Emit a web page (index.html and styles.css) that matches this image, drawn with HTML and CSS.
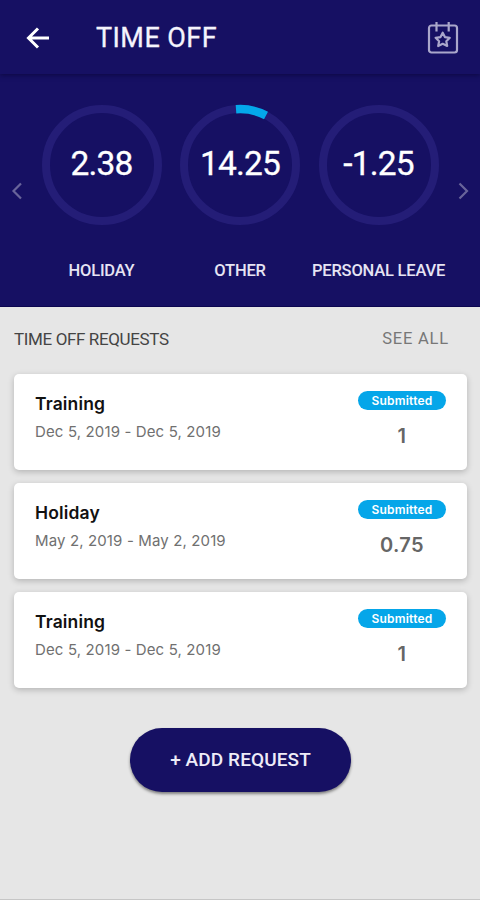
FILE: index.html
```html
<!DOCTYPE html>
<html lang="en">
<head>
<meta charset="utf-8">
<title>Time Off</title>
<link rel="stylesheet" href="styles.css">
</head>
<body>
<div class="app">
  <header class="bar">
    <svg class="back" width="24" height="24" viewBox="0 0 24 24"><path d="M23 12H2.5M12 2.5L2.5 12L12 21.5"/></svg>
    <h1 class="title">TIME OFF</h1>
    <svg class="calendar" width="32" height="34" viewBox="0 0 32 34"><rect x="2" y="4.5" width="28" height="27" rx="2.5"/><path d="M9.5 1v9.5M21.7 1v9.5"/><path d="M15.7 11.7l2.2 4.4 4.9.7-3.5 3.5.9 4.7-4.5-2.2-4.5 2.2.9-4.7-3.5-3.5 4.9-.7z"/></svg>
  </header>
  <section class="balances">
    <svg class="chevron" width="11" height="18" viewBox="0 0 11 18"><path d="M10 1.5L2.5 9L10 16.5"/></svg>
    <div class="gauges">
      <div class="gauge">
        <div class="ring"><svg width="122" height="122" viewBox="0 0 122 122"><circle class="track" cx="61" cy="61" r="56"/></svg><span class="value">2.38</span></div>
        <div class="label">HOLIDAY</div>
      </div>
      <div class="gauge">
        <div class="ring"><svg width="122" height="122" viewBox="0 0 122 122"><circle class="track" cx="61" cy="61" r="56"/><path class="progress" d="M57 5.2A56 56 0 0 1 87 11.4"/></svg><span class="value">14.25</span></div>
        <div class="label">OTHER</div>
      </div>
      <div class="gauge">
        <div class="ring"><svg width="122" height="122" viewBox="0 0 122 122"><circle class="track" cx="61" cy="61" r="56"/></svg><span class="value">-1.25</span></div>
        <div class="label">PERSONAL LEAVE</div>
      </div>
    </div>
    <svg class="chevron" width="11" height="18" viewBox="0 0 11 18"><path d="M1.5 1.5L9 9L1.5 16.5"/></svg>
  </section>
  <main class="content">
    <div class="heading"><h2>TIME OFF REQUESTS</h2><a class="all">SEE ALL</a></div>
    <div class="list">
      <article class="card">
        <div><h3>Training</h3><p>Dec 5, 2019 - Dec 5, 2019</p></div>
        <div class="status"><span class="badge">Submitted</span><strong>1</strong></div>
      </article>
      <article class="card">
        <div><h3>Holiday</h3><p>May 2, 2019 - May 2, 2019</p></div>
        <div class="status"><span class="badge">Submitted</span><strong>0.75</strong></div>
      </article>
      <article class="card">
        <div><h3>Training</h3><p>Dec 5, 2019 - Dec 5, 2019</p></div>
        <div class="status"><span class="badge">Submitted</span><strong>1</strong></div>
      </article>
    </div>
    <button class="add">+ ADD REQUEST</button>
  </main>
</div>
</body>
</html>
```
FILE: styles.css
```css
* { box-sizing: border-box; }
body, h1, h2, h3, p { margin: 0; }
body { background: #e6e6e6; font-family: Roboto, sans-serif; }
svg { display: block; fill: none; flex: none; }
.app { height: 900px; display: flex; flex-direction: column; border-bottom: 1px solid #c6c6c6; }
.bar { height: 74px; background: #161063; display: flex; align-items: center; padding: 2px 21px 0 26px; box-shadow: 0 1px 5px rgba(8, 4, 50, .7); z-index: 1; }
.back { stroke: #fff; stroke-width: 3; }
.title { margin-left: 46px; flex: 1; color: #f5f4fc; font-size: 27px; font-weight: 400; line-height: 32px; letter-spacing: .45px; -webkit-text-stroke: .3px #f5f4fc; }
.calendar { stroke: #aaa7cb; stroke-width: 2.2; stroke-linejoin: round; }
.balances { height: 233px; background: #161063; display: flex; align-items: flex-start; padding: 30px 11px 0; border-bottom: 1px solid #0c0650; }
.chevron { margin-top: 78px; stroke: #68649a; stroke-width: 2.2; }
.gauges { flex: 1; display: grid; grid-template-columns: repeat(3, 138.5px); justify-content: center; }
.gauge { display: flex; flex-direction: column; align-items: center; }
.ring { display: grid; place-items: center; }
.ring > * { grid-area: 1 / 1; }
.track { stroke: #241d77; stroke-width: 8; }
.progress { stroke: #04a8ea; stroke-width: 8.5; }
.value { padding-bottom: 2px; color: #fff; font-size: 33.5px; line-height: 40px; letter-spacing: -.8px; -webkit-text-stroke: .3px #fff; }
.label { margin-top: 35px; color: #e6e4f3; font-size: 16.5px; font-weight: 500; line-height: 20px; letter-spacing: -.2px; white-space: nowrap; }
.content { flex: 1; padding: 0 13px 0 14px; }
.heading { height: 67px; padding: 22px 18px 0 0; display: flex; justify-content: space-between; line-height: 20px; }
.heading h2 { font-size: 17px; font-weight: 400; letter-spacing: -.37px; color: #444; }
.all { color: #777; font-size: 16.5px; letter-spacing: .8px; }
.list { display: flex; flex-direction: column; gap: 13px; font-family: Inter, sans-serif; }
.card { height: 96px; background: #fff; border-radius: 5px; box-shadow: 0 2px 6px rgba(0, 0, 0, .22); padding: 17px 21px 0; display: flex; justify-content: space-between; }
.card h3 { color: #111; font-size: 17.5px; font-weight: 600; line-height: 26px; letter-spacing: .15px; }
.card p { margin-top: 3px; color: #707070; font-size: 15px; line-height: 23px; letter-spacing: .13px; }
.status { width: 88px; display: flex; flex-direction: column; align-items: center; }
.badge { width: 88px; height: 19px; border-radius: 10px; background: #05a6e9; color: #fff; text-align: center; font-size: 12px; font-weight: 600; line-height: 19px; letter-spacing: .2px; }
.status strong { margin-top: 13px; color: #666; font-size: 20px; font-weight: 600; line-height: 26px; letter-spacing: .4px; }
.add { display: block; width: 221px; height: 64px; margin: 40px auto 0; border: 0; border-radius: 32px; background: #161063; color: #eeecf8; font: 500 19px/24px Roboto, sans-serif; letter-spacing: .1px; box-shadow: 0 2px 3px rgba(0, 0, 0, .45); }
```
